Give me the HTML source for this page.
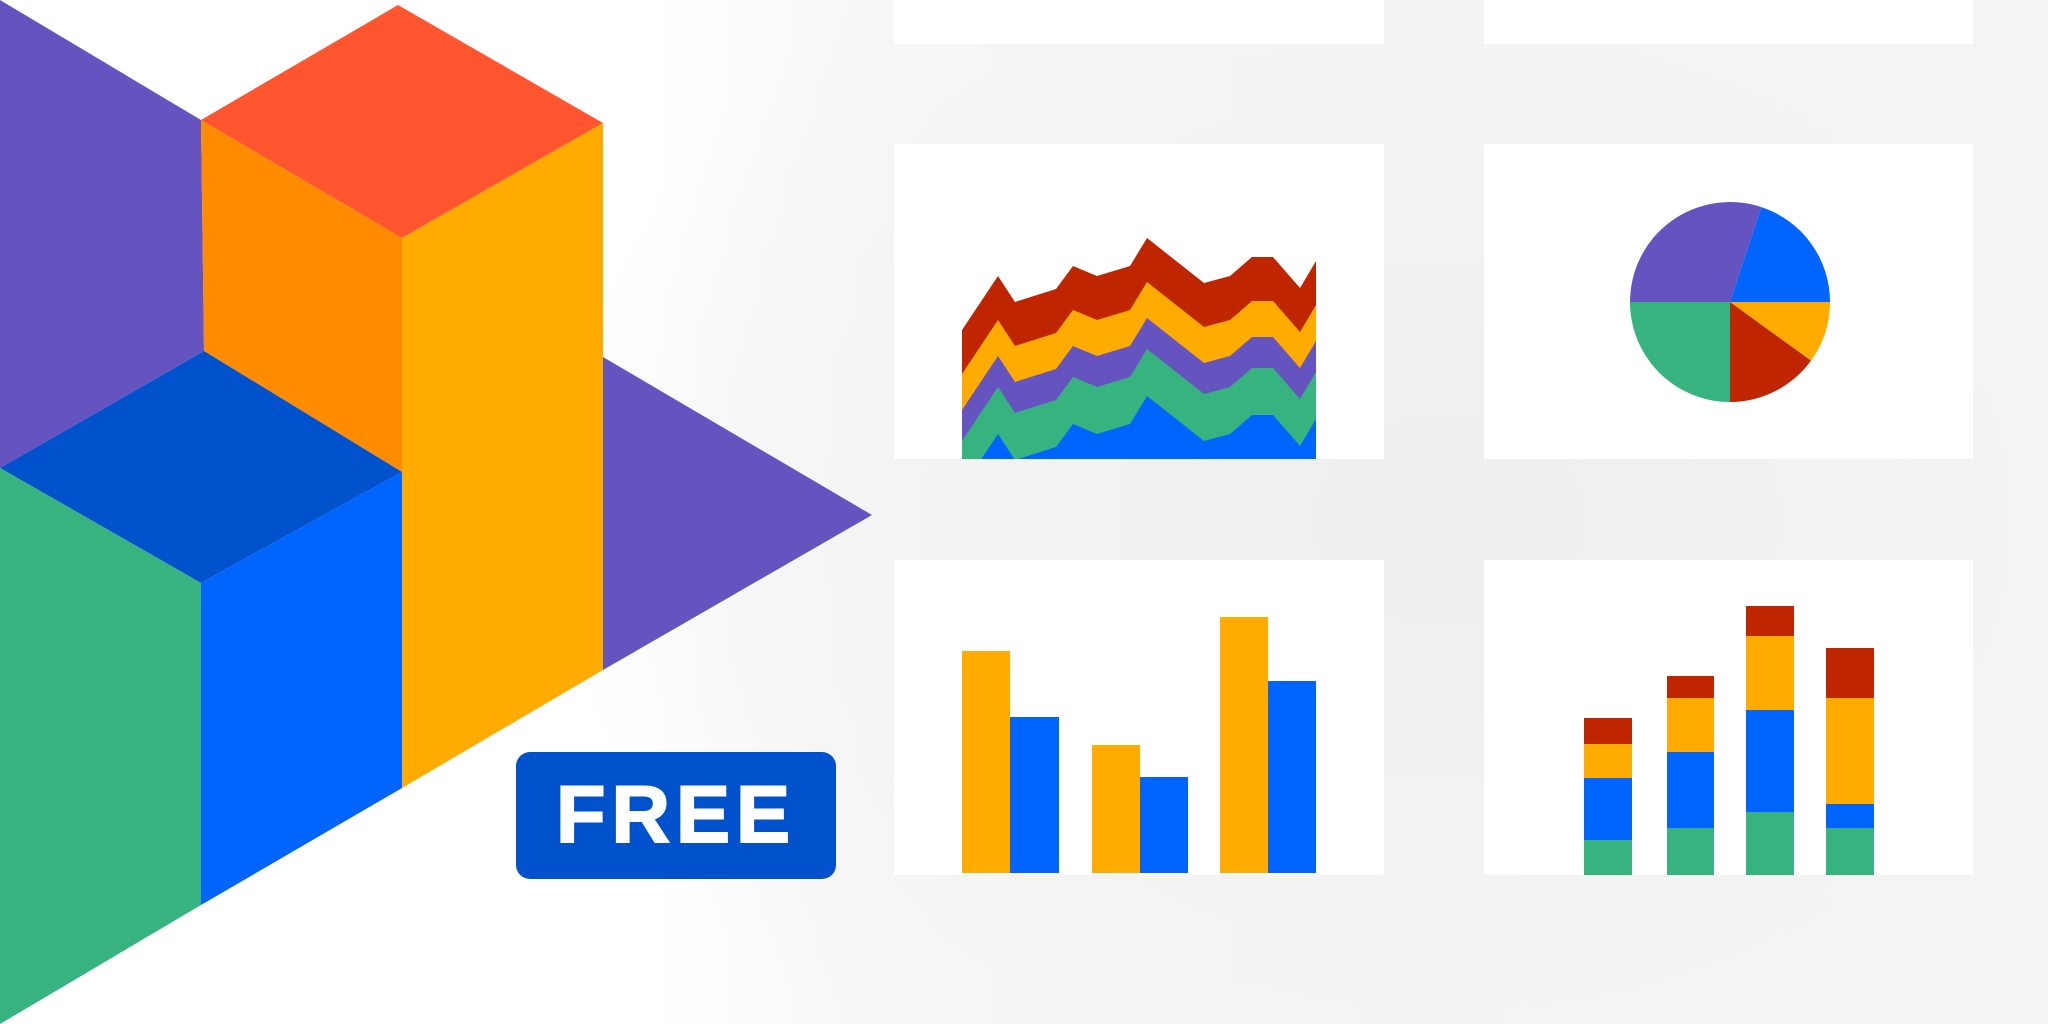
<!DOCTYPE html>
<html><head><meta charset="utf-8"><style>
html,body{margin:0;padding:0;}
body{width:2048px;height:1024px;overflow:hidden;position:relative;
background:
radial-gradient(ellipse 900px 700px at 1450px 520px,#eeeeee 0%,#f3f3f3 55%,rgba(255,255,255,0) 100%),
linear-gradient(to right,#fff 0,#fff 650px,#f7f7f7 900px,#f3f3f3 1400px,#f5f5f5 2048px);
font-family:"Liberation Sans",sans-serif;}
.card{position:absolute;background:#fff;}
.badge{position:absolute;left:516px;top:752px;width:320px;height:127px;background:#0052cc;border-radius:14px;color:#fff;font-weight:bold;font-size:81px;line-height:127px;text-align:center;letter-spacing:6px;-webkit-text-stroke:2px #fff;}
svg{position:absolute;left:0;top:0;}
</style></head><body>
<div class="card" style="left:894px;top:0;width:490px;height:44px"></div>
<div class="card" style="left:1484px;top:0;width:489px;height:44px"></div>
<div class="card" style="left:894px;top:144px;width:490px;height:315px"></div>
<div class="card" style="left:1484px;top:144px;width:489px;height:315px"></div>
<div class="card" style="left:894px;top:560px;width:490px;height:315px"></div>
<div class="card" style="left:1484px;top:560px;width:489px;height:315px"></div>
<svg width="2048" height="1024" viewBox="0 0 2048 1024">
<defs><clipPath id="ac"><rect x="962" y="150" width="354" height="309"/></clipPath>
<polygon id="layer" points="962,330 998,276 1015,302 1056,289 1073,266 1097,276 1130,266 1147,238 1204,283 1230,276 1252,257 1273,257 1300,288 1316,261 1316,700 962,700"/></defs>
<polygon points="0,0 201,120 204,351 0,468" fill="#6554c0"/>
<polygon points="201,120 398,5 603,123 402,238" fill="#ff5630"/>
<polygon points="201,120 402,238 402,472 204,351" fill="#ff8b00"/>
<polygon points="603,357 872,515 603,670" fill="#6554c0"/>
<polygon points="402,238 603,123 603,670 402,788" fill="#ffab00"/>
<polygon points="0,468 204,351 402,472 201,583" fill="#0052cc"/>
<polygon points="0,468 201,583 201,905 0,1024" fill="#36b37e"/>
<polygon points="201,583 402,472 402,788 201,905" fill="#0065ff"/>
<g clip-path="url(#ac)">
<use href="#layer" fill="#bf2600"/>
<use href="#layer" fill="#ffab00" transform="translate(0,44)"/>
<use href="#layer" fill="#6554c0" transform="translate(0,80)"/>
<use href="#layer" fill="#36b37e" transform="translate(0,111)"/>
<use href="#layer" fill="#0065ff" transform="translate(0,158)"/>
</g>
<path d="M1730,302 L1761.4,207.1 A100,100 0 0 1 1830,302 Z" fill="#0065ff"/>
<path d="M1730,302 L1830,302 A100,100 0 0 1 1811,360.6 Z" fill="#ffab00"/>
<path d="M1730,302 L1811,360.6 A100,100 0 0 1 1730,402 Z" fill="#bf2600"/>
<path d="M1730,302 L1730,402 A100,100 0 0 1 1630,302 Z" fill="#36b37e"/>
<path d="M1730,302 L1630,302 A100,100 0 0 1 1761.4,207.1 Z" fill="#6554c0"/>
<rect x="962" y="651" width="48" height="222" fill="#ffab00"/>
<rect x="1010" y="717" width="49" height="156" fill="#0065ff"/>
<rect x="1092" y="745" width="48" height="128" fill="#ffab00"/>
<rect x="1140" y="777" width="48" height="96" fill="#0065ff"/>
<rect x="1220" y="617" width="48" height="256" fill="#ffab00"/>
<rect x="1268" y="681" width="48" height="192" fill="#0065ff"/>
<g>
<rect x="1584" y="718" width="48" height="26" fill="#bf2600"/>
<rect x="1584" y="744" width="48" height="34" fill="#ffab00"/>
<rect x="1584" y="778" width="48" height="62" fill="#0065ff"/>
<rect x="1584" y="840" width="48" height="35" fill="#36b37e"/>
<rect x="1667" y="676" width="47" height="22" fill="#bf2600"/>
<rect x="1667" y="698" width="47" height="54" fill="#ffab00"/>
<rect x="1667" y="752" width="47" height="76" fill="#0065ff"/>
<rect x="1667" y="828" width="47" height="47" fill="#36b37e"/>
<rect x="1746" y="606" width="48" height="30" fill="#bf2600"/>
<rect x="1746" y="636" width="48" height="74" fill="#ffab00"/>
<rect x="1746" y="710" width="48" height="102" fill="#0065ff"/>
<rect x="1746" y="812" width="48" height="63" fill="#36b37e"/>
<rect x="1826" y="648" width="48" height="50" fill="#bf2600"/>
<rect x="1826" y="698" width="48" height="106" fill="#ffab00"/>
<rect x="1826" y="804" width="48" height="24" fill="#0065ff"/>
<rect x="1826" y="828" width="48" height="47" fill="#36b37e"/>
</g>
</svg>
<div class="badge">FREE</div>
</body></html>
